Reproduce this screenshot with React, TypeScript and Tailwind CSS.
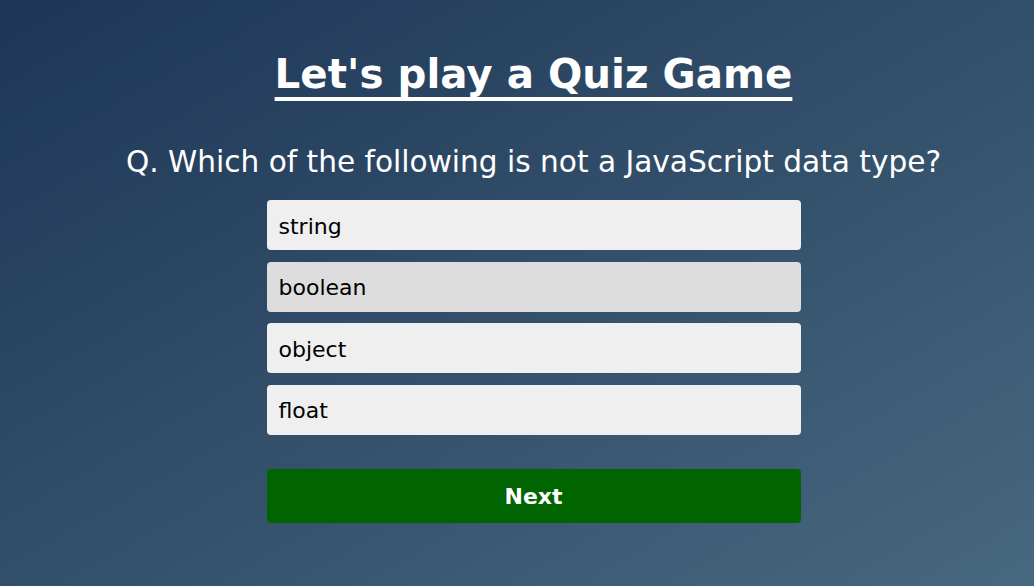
const options = ["string", "boolean", "object", "float"];

export default function App() {
  return (
    <div
      className="min-h-screen w-full bg-[linear-gradient(to_bottom_right,#1d3656,#48687f)] flex flex-col items-center pl-[33px] pt-[48px] text-white"
      style={{ fontFamily: '"DejaVu Sans", Verdana, sans-serif' }}
    >
      <h1 className="text-[40.4px] leading-[52px] font-bold underline decoration-[4px] underline-offset-[9px] [text-decoration-skip-ink:none]">
        Let's play a Quiz Game
      </h1>
      <p className="mt-[44px] text-[29.6px] leading-[36px] whitespace-nowrap">
        Q. Which of the following is not a JavaScript data type?
      </p>
      <div className="mt-[20px] w-[534px] flex flex-col gap-[11.5px]">
        {options.map((opt, i) => (
          <button
            key={opt}
            className={`h-[50px] rounded-[4px] px-[12px] pt-[2px] text-left text-[22px] text-black ${
              i === 1 ? "bg-[#dddddd]" : "bg-[#efefef]"
            }`}
          >
            {opt}
          </button>
        ))}
      </div>
      <button className="mt-[34px] w-[534px] h-[54px] rounded-[4px] bg-[#006400] pt-[2px] text-white text-[22px] font-bold">
        Next
      </button>
    </div>
  );
}
